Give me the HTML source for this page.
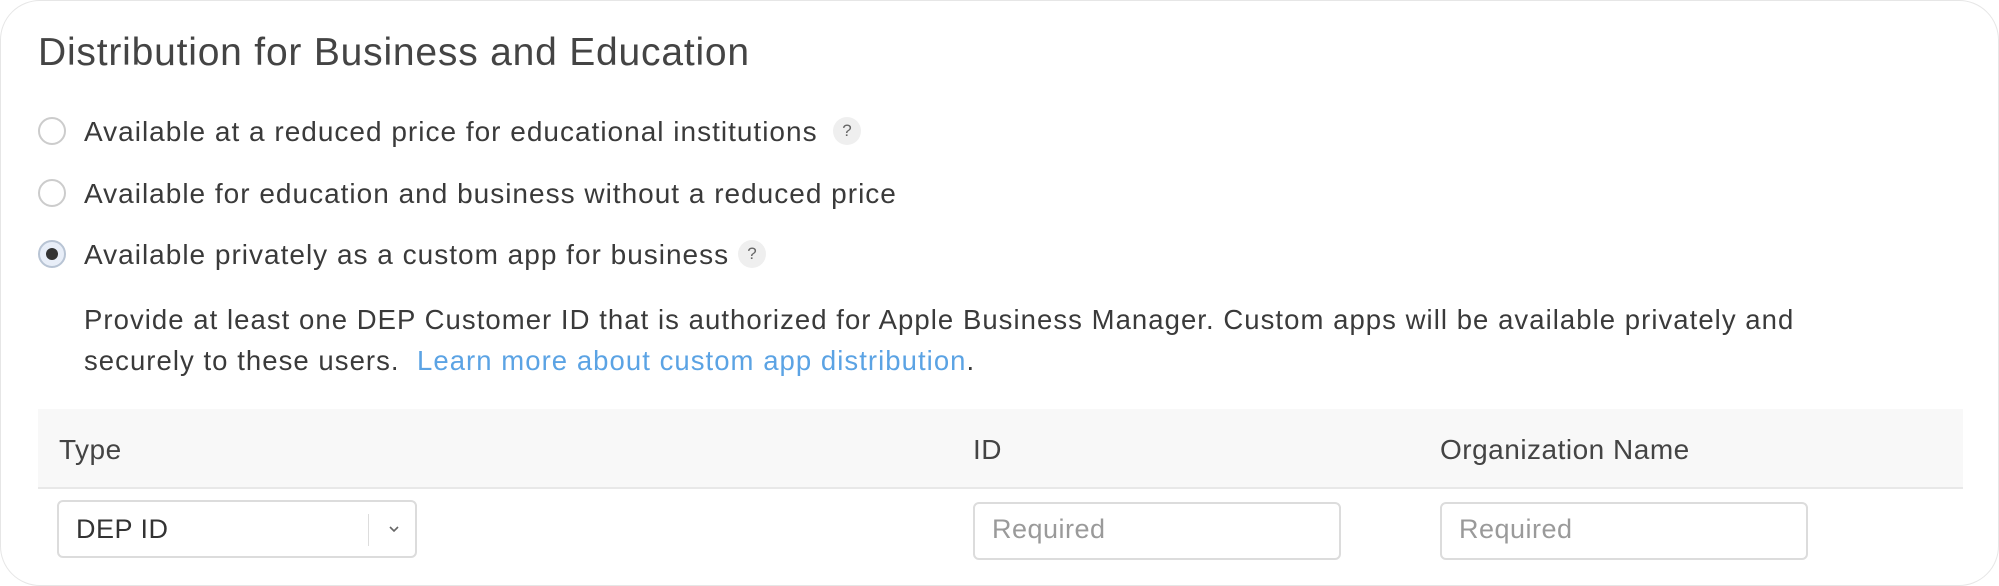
<!DOCTYPE html>
<html><head><meta charset="utf-8"><style>
*{box-sizing:border-box;margin:0;padding:0}
body{width:1999px;height:586px;background:#fff;font-family:"Liberation Sans",sans-serif;color:#333;position:relative;overflow:hidden}
.card{position:absolute;left:0;top:0;width:1999px;height:586px;border:1px solid #e6e6e6;border-radius:40px}
.t{position:absolute;white-space:nowrap}
h1{position:absolute;left:38px;top:31px;font-size:39px;font-weight:normal;color:#444;letter-spacing:0.8px}
.radio{position:absolute;left:38px;width:28px;height:28px;border:2px solid #cccccc;border-radius:50%;background:#fff}
.radio.on{background:#e8eef8;border-color:#b8c4d4}
.radio.on::after{content:"";position:absolute;left:6px;top:6px;width:12px;height:12px;border-radius:50%;background:#333}
.opt{font-size:28px;color:#3a3a3a;left:84px;letter-spacing:1px}
.q{position:absolute;width:28px;height:28px;border-radius:50%;background:#efefef;color:#666;font-size:17px;text-align:center;line-height:28px}
.p{left:84px;font-size:27.5px;color:#3a3a3a;letter-spacing:1.05px}
a{color:#5ba3e4;text-decoration:none}
.band{position:absolute;left:38px;top:409px;width:1925px;height:80px;background:#f8f8f8;border-bottom:2px solid #e8e8e8}
.hd{font-size:28px;color:#444;top:434px;letter-spacing:0.5px}
.box{position:absolute;border:2px solid #dcdcdc;border-radius:6px;background:#fff;font-size:27px;letter-spacing:0.5px}
</style></head><body>
<div class="card"></div>
<h1>Distribution for Business and Education</h1>
<div class="radio" style="top:117px"></div>
<div class="t opt" style="top:116px">Available at a reduced price for educational institutions</div>
<div class="q" style="left:833px;top:117px">?</div>
<div class="radio" style="top:179px"></div>
<div class="t opt" style="top:178px">Available for education and business without a reduced price</div>
<div class="radio on" style="top:240px"></div>
<div class="t opt" style="top:239px">Available privately as a custom app for business</div>
<div class="q" style="left:738px;top:240px">?</div>
<div class="t p" style="top:304px">Provide at least one DEP Customer ID that is authorized for Apple Business Manager. Custom apps will be available privately and</div>
<div class="t p" style="top:345px">securely to these users. &nbsp;<a>Learn more about custom app distribution</a>.</div>
<div class="band"></div>
<div class="t hd" style="left:59px">Type</div>
<div class="t hd" style="left:973px">ID</div>
<div class="t hd" style="left:1440px">Organization Name</div>
<div class="box" style="left:57px;top:500px;width:360px;height:58px">
 <span class="t" style="left:17px;top:12px;color:#333">DEP ID</span>
 <div style="position:absolute;left:309px;top:12px;width:1px;height:32px;background:#ddd"></div>
 <svg style="position:absolute;left:328px;top:22px" width="14" height="10" viewBox="0 0 14 10"><path d="M3 3 L7 7 L11 3" fill="none" stroke="#666" stroke-width="1.6"/></svg>
</div>
<div class="box" style="left:973px;top:502px;width:368px;height:58px"><span class="t" style="left:17px;top:10px;color:#9a9a9a">Required</span></div>
<div class="box" style="left:1440px;top:502px;width:368px;height:58px"><span class="t" style="left:17px;top:10px;color:#9a9a9a">Required</span></div>
</body></html>
